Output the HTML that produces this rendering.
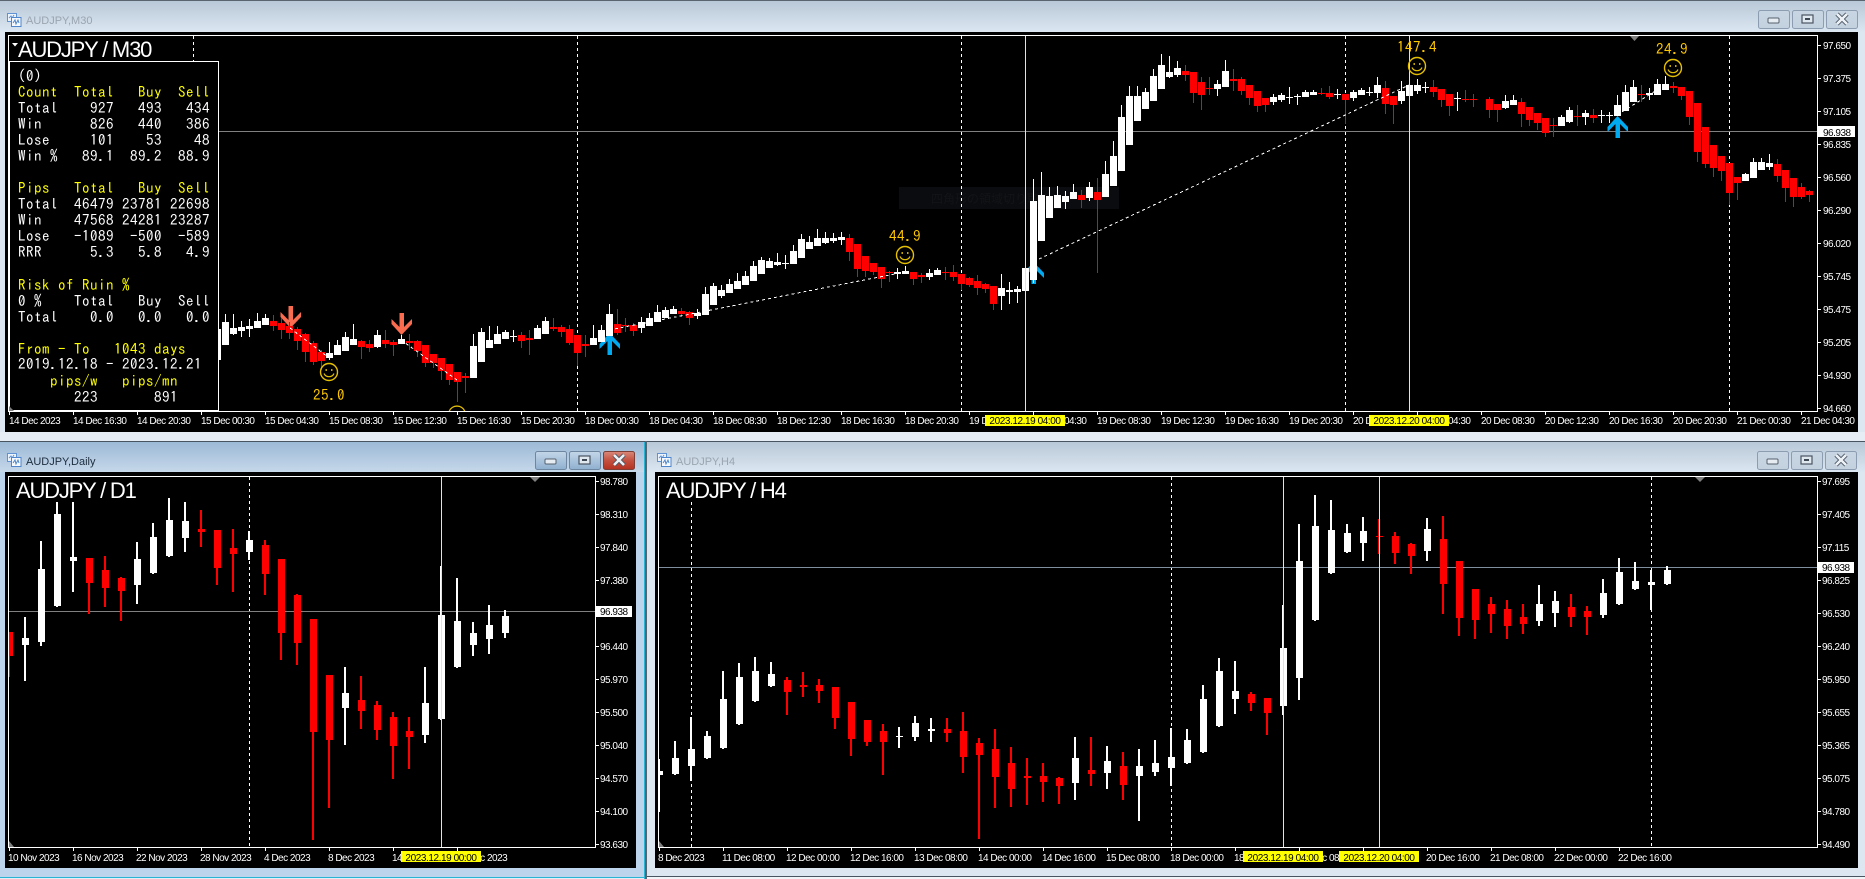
<!DOCTYPE html>
<html lang="en">
<head>
<meta charset="utf-8">
<title>AUDJPY charts</title>
<style>
html,body{margin:0;padding:0;background:#dce7f2;width:1865px;height:879px;overflow:hidden}
svg{display:block;position:absolute;left:0;top:0}
text{font-family:"Liberation Sans",sans-serif}
.a{font-size:10px;letter-spacing:-.5px;fill:#fff}
.h{font-size:10px;letter-spacing:-.42px;fill:#000;text-anchor:middle}
.b{font-size:10px;letter-spacing:-.5px;fill:#000}
.s{font-size:22px;letter-spacing:-1.2px;fill:#fff}
.ti{font-size:11px;fill:#9aa5b0}
.ta{font-size:11px;fill:#1c2c3c}
.p{font-family:"IPAGothic","Liberation Mono",monospace;font-size:15px;letter-spacing:.5px;white-space:pre;fill:#fff}
.y{fill:#ff0}
.g{font-family:"IPAGothic","Liberation Mono",monospace;font-size:15px;letter-spacing:.5px;fill:#ffc800}
.c{shape-rendering:crispEdges;fill:none}
.j{font-family:"Liberation Sans","Noto Sans CJK JP",sans-serif;font-size:12px;fill:#121417}
</style>
</head>
<body>
<svg width="1865" height="879" viewBox="0 0 1865 879" xmlns="http://www.w3.org/2000/svg">
<defs>
<linearGradient id="ti" x1="0" y1="0" x2="0" y2="1"><stop offset="0" stop-color="#b9c8d7"/><stop offset="1" stop-color="#dbe6f1"/></linearGradient>
<linearGradient id="ta" x1="0" y1="0" x2="0" y2="1"><stop offset="0" stop-color="#9cb9d6"/><stop offset="1" stop-color="#c6d8ea"/></linearGradient>
<linearGradient id="bi" x1="0" y1="0" x2="0" y2="1"><stop offset="0" stop-color="#c8d5e2"/><stop offset="1" stop-color="#c4d2e0"/></linearGradient>
<linearGradient id="ba" x1="0" y1="0" x2="0" y2="1"><stop offset="0" stop-color="#c4d6e8"/><stop offset=".5" stop-color="#a9c3dc"/><stop offset="1" stop-color="#8fb0d0"/></linearGradient>
<linearGradient id="br" x1="0" y1="0" x2="0" y2="1"><stop offset="0" stop-color="#d98a7c"/><stop offset=".5" stop-color="#c4503f"/><stop offset="1" stop-color="#b5301f"/></linearGradient>
<polygon id="au" points="0,0 10.5,11 10.5,16 2.5,8 2.5,22 -2,22 -2,8 -10,16 -10,11"/>
<g id="sm" fill="none" stroke="#e6c000"><circle r="8.5" stroke-width="1.4"/><path d="M-5 1.5A5.5 5.5 0 0 0 5 1.5" stroke-width="1.2"/><path d="M-2.8-3V-1M2.8-3V-1" stroke-width="1.3"/></g>
<g id="ic"><rect x=".5" y=".5" width="9" height="8" fill="#eef4fb" stroke="#5f93d4"/><path d="M2 5l2-2 1 2 2-3" fill="none" stroke="#5f93d4"/><rect x="4.5" y="4.5" width="9.5" height="9" fill="#f7fafd" stroke="#4f86cc"/><path d="M6 10l2-3 1 4 2-4 1 3" fill="none" stroke="#4f86cc"/></g>
<g id="gm"><rect x="10" y="8" width="11" height="5" rx="1" fill="#e6ecf2" stroke="#55606c"/></g>
<g id="gx"><rect x="10" y="5" width="11" height="8" fill="#dfe7ef" stroke="#4a5562" stroke-width="1.2"/><rect x="13" y="8" width="5" height="2" fill="#3d4854"/></g>
<g id="gc"><path d="M11 4L21 14M21 4L11 14" stroke="#4a5562" stroke-width="4.4"/><path d="M11 4L21 14M21 4L11 14" stroke="#eef2f6" stroke-width="2.6"/></g>
</defs>

<!-- window backgrounds -->
<rect width="1865" height="879" fill="#dce7f2"/>
<rect x="0" y="1" width="1865" height="31" fill="url(#ti)"/>
<rect width="1865" height="1" fill="#5a6470"/>
<rect x="0" y="432" width="1865" height="9" fill="#e6edf5"/>
<rect x="0" y="441" width="645" height="1" fill="#4a5562"/>
<rect x="646" y="441" width="1219" height="1" fill="#4a5562"/>

<rect x="0" y="442" width="645" height="437" fill="#bcd5ec"/>
<rect x="0" y="442" width="645" height="30" fill="url(#ta)"/>
<rect x="0" y="877" width="645" height="1" fill="#2ab4d4"/>
<rect x="0" y="878" width="645" height="1" fill="#e6edf5"/>
<rect x="644" y="442" width="1" height="437" fill="#2ab4d4"/>
<rect x="645" y="441" width="2" height="438" fill="#5a6470"/>
<rect x="647" y="442" width="1218" height="437" fill="#dce7f2"/>
<rect x="647" y="442" width="1218" height="30" fill="url(#ti)"/>
<rect x="647" y="876" width="1218" height="1" fill="#4a5562"/>
<rect x="647" y="877" width="1218" height="2" fill="#f2f5f8"/>

<!-- title icons & text -->
<use href="#ic" x="7" y="13"/><text class="ti" x="26" y="24">AUDJPY,M30</text>
<use href="#ic" x="7" y="453"/><text class="ta" x="26" y="465">AUDJPY,Daily</text>
<use href="#ic" x="657" y="453"/><text class="ti" x="676" y="465">AUDJPY,H4</text>

<!-- window buttons -->
<g fill="url(#bi)" stroke="#8c9db1"><rect x="1758.5" y="10.5" width="31" height="18" rx="2"/><rect x="1792.5" y="10.5" width="31" height="18" rx="2"/><rect x="1826.5" y="10.5" width="31" height="18" rx="2"/></g>
<use href="#gm" x="1758" y="10"/><use href="#gx" x="1792" y="10"/><use href="#gc" x="1826" y="10"/>
<g fill="url(#bi)" stroke="#8c9db1"><rect x="1757.5" y="451.5" width="31" height="18" rx="2"/><rect x="1791.5" y="451.5" width="31" height="18" rx="2"/><rect x="1825.5" y="451.5" width="31" height="18" rx="2"/></g>
<use href="#gm" x="1757" y="451"/><use href="#gx" x="1791" y="451"/><use href="#gc" x="1825" y="451"/>
<g fill="url(#ba)" stroke="#6f86a0"><rect x="535.5" y="451.5" width="31" height="18" rx="2"/><rect x="569.5" y="451.5" width="31" height="18" rx="2"/></g>
<rect x="603.5" y="451.5" width="31" height="18" rx="2" fill="url(#br)" stroke="#7c4038"/>
<use href="#gm" x="535" y="451"/><use href="#gx" x="569" y="451"/><use href="#gc" x="603" y="451"/>

<!-- ============ M30 ============ -->
<rect x="5" y="32" width="1853" height="400" fill="#000"/>
<rect x="899" y="187" width="220" height="22" fill="#0a0c0f"/>
<text class="j" x="931" y="203">四角形の領域切り取り</text>
<g class="c" stroke="#fff" stroke-dasharray="3 3"><path d="M193.5 36V411M577.5 36V411M961.5 36V411M1345.5 36V411M1729.5 36V411"/></g>
<path class="c" d="M218 131.5H1817" stroke="#808080"/>
<g fill="#00aaf0"><use href="#au" x="609.5" y="333"/><use href="#au" x="1033.5" y="262"/><use href="#au" x="1617.5" y="116"/></g>
<g fill="#fa6c50"><g transform="translate(290.5,328) scale(1,-1)"><use href="#au"/></g><g transform="translate(401.5,335) scale(1,-1)"><use href="#au"/></g></g>

<g transform="translate(.5,0)">
<path class="c" stroke="#fff" d="M225 314V345M233 314V335M241 321V337M249 319V337M257 313V328M265 314V325M329 342V360M337 340V355M345 332V351M353 324V345M377 330V348M401 335V344M473 334V378M481 328V362M489 326V348M497 326V344M505 330V339M513 330V342M537 325V339M545 317V334M593 325V345M601 325V342M609 304V336M641 317V333M649 313V326M657 305V322M665 307V318M673 306V314M697 309V319M705 287V315M713 283V305M721 285V298M729 279V293M737 273V289M745 271V285M753 261V281M761 257V274M769 258V268M777 253V266M785 255V269M793 245V264M801 234V258M809 236V249M817 229V246M825 232V244M833 233V243M841 232V245M897 268V279M905 266V274M929 269V280M937 268V275M1001 274V310M1009 282V304M1017 286V303M1025 268V291M1033 179V283M1041 172V241M1049 187V218M1057 186V208M1065 191V209M1073 184V199M1089 182V201M1105 161V197M1113 141V186M1121 105V171M1129 86V145M1137 86V121M1145 88V109M1153 69V101M1161 54V89M1169 56V78M1177 61V77M1217 80V96M1225 60V87M1273 94V105M1281 93V102M1289 87V104M1297 94V105M1305 90V97M1313 90V95M1337 89V99M1353 90V101M1361 88V95M1369 87V96M1377 77V98M1401 81V104M1409 78V96M1417 79V94M1425 82V93M1457 92V111M1505 95V109M1513 95V105M1561 115V126M1569 107V123M1585 110V125M1601 110V123M1609 112V123M1617 95V116M1625 85V111M1633 80V102M1649 88V100M1657 79V95M1665 76V90M1745 173V181M1753 158V178M1761 158V170M1769 154V170"/>
<path class="c" stroke="#fff" stroke-width="7" d="M217 329V360M225 322V345M233 328V334M241 327V331M249 326V329M257 321V328M265 318V325M329 353V358M337 345V355M345 337V351M353 339V345M377 335V347M401 339V344M473 346V378M481 332V362M489 340V348M497 334V344M505 332V339M513 336V337M537 328V339M545 321V334M593 338V345M601 330V342M609 314V336M641 322V328M649 318V326M657 312V322M665 310V318M673 309V314M697 313V316M705 294V315M713 286V305M721 290V296M729 284V293M737 281V289M745 276V285M753 266V281M761 260V274M769 261V268M777 262V265M785 263V264M793 251V264M801 239V258M809 242V249M817 238V246M825 238V243M833 238V241M841 237V240M897 272V274M905 271V274M929 273V277M937 270V275M1001 288V296M1009 290V292M1017 289V292M1025 268V291M1033 201V280M1041 195V241M1049 196V218M1057 195V208M1065 196V202M1073 192V199M1089 187V198M1105 174V197M1113 156V186M1121 117V171M1129 96V145M1137 96V121M1145 92V109M1153 76V101M1161 65V89M1169 72V77M1177 68V75M1217 84V89M1225 71V87M1273 97V102M1281 95V100M1289 97V98M1297 96V97M1305 92V97M1313 92V95M1337 94V95M1353 92V98M1361 90V95M1369 92V93M1377 85V93M1401 91V101M1409 85V96M1417 85V91M1425 87V88M1457 98V99M1505 101V108M1513 100V105M1561 117V126M1569 110V122M1585 113V117M1601 115V116M1609 115V116M1617 105V116M1625 92V111M1633 87V102M1649 93V95M1657 84V95M1665 84V90M1745 174V181M1753 162V178M1761 162V170M1769 163V167"/>
<path class="c" stroke="#f00" d="M273 315V331M281 318V339M289 322V339M297 327V350M305 333V362M313 341V365M321 350V370M361 340V359M369 340V352M385 330V348M393 340V356M409 334V350M417 340V357M425 345V367M433 354V368M441 358V380M449 364V385M457 372V402M465 373V393M521 332V348M529 330V355M553 318V331M561 325V337M569 325V345M577 335V366M585 335V357M617 309V335M625 318V332M633 323V336M681 308V317M689 311V325M849 234V261M857 244V277M865 256V277M873 263V275M881 267V288M889 271V282M913 272V285M921 273V283M945 267V280M953 265V281M961 274V290M969 277V287M977 275V295M985 283V293M993 286V310M1081 190V208M1097 178V273M1185 65V81M1193 72V103M1201 77V110M1209 77V95M1233 69V91M1241 77V95M1249 85V105M1257 91V112M1265 98V112M1321 88V95M1329 86V99M1345 94V124M1385 81V114M1393 96V124M1433 80V97M1441 89V107M1449 94V116M1465 90V102M1473 94V107M1489 97V118M1497 104V122M1521 98V127M1529 107V126M1537 113V130M1545 118V137M1553 118V137M1577 105V126M1593 109V123M1641 85V102M1673 82V93M1681 87V100M1689 91V125M1697 103V162M1705 127V168M1713 145V177M1721 156V181M1729 163V205M1737 177V200M1777 159V182M1785 170V202M1793 178V207M1801 183V199M1809 190V202"/>
<path class="c" stroke="#f00" stroke-width="7" d="M273 321V326M281 323V330M289 326V333M297 329V341M305 334V352M313 343V362M321 352V361M361 341V347M369 344V348M385 340V344M393 342V345M409 341V343M417 341V351M425 345V363M433 354V363M441 358V371M449 364V380M457 372V382M465 376V378M521 335V341M529 338V340M553 327V329M561 327V332M569 329V343M577 335V353M585 344V346M617 324V333M625 325V326M633 325V331M681 311V314M689 312V318M849 238V252M857 244V269M865 256V271M873 263V272M881 267V279M889 272V273M913 272V279M921 275V277M945 272V273M953 272V277M961 274V284M969 278V285M977 281V288M985 284V289M993 286V304M1081 195V200M1097 192V200M1185 71V75M1193 72V93M1201 82V95M1209 88V89M1233 79V81M1241 79V91M1249 85V98M1257 91V106M1265 98V105M1321 93V94M1329 93V97M1345 94V100M1385 88V104M1393 96V105M1433 87V92M1441 89V100M1449 94V106M1465 99V100M1473 99V100M1489 99V110M1497 104V110M1521 102V114M1529 107V120M1537 113V123M1545 118V133M1553 125V126M1577 116V117M1593 115V118M1641 94V95M1673 86V88M1681 87V96M1689 91V117M1697 103V152M1705 127V164M1713 145V168M1721 156V171M1729 163V193M1737 177V183M1777 164V176M1785 170V188M1793 178V197M1801 187V197M1809 191V195"/>
</g>
<path class="c" d="M1025.5 36V411" stroke="#ff0"/><path class="c" d="M1409.5 36V411" stroke="#ff0"/>
<g fill="none" stroke="#fff" stroke-dasharray="3 3" shape-rendering="crispEdges"><path d="M290 328L328 357M401 340L457 380M609 330L905 272M1039 259L1409 85M1617 115L1665 85"/></g>
<use href="#sm" x="329" y="372"/><use href="#sm" x="905" y="255"/><use href="#sm" x="1417" y="66"/><use href="#sm" x="1673" y="68"/>
<path d="M449.3 411A8.5 8.5 0 0 1 464.7 411" fill="none" stroke="#e6c000" stroke-width="1.4"/>
<text class="g" x="313" y="400">25.0</text><text class="g" x="889" y="241">44.9</text><text class="g" x="1397" y="52">147.4</text><text class="g" x="1656" y="54">24.9</text>

<rect x="9.5" y="61.5" width="209" height="349" fill="#000" stroke="#fff"/>
<path d="M9 411V406L14 411Z" fill="#808080"/>
<text class="p" x="18" y="81">(0)</text>
<text class="p y" x="18" y="97">Count  Total   Buy  Sell</text>
<text class="p" x="18" y="113">Total    927   493   434</text>
<text class="p" x="18" y="129">Win      826   440   386</text>
<text class="p" x="18" y="145">Lose     101    53    48</text>
<text class="p" x="18" y="161">Win %   89.1  89.2  88.9</text>
<text class="p y" x="18" y="193">Pips   Total   Buy  Sell</text>
<text class="p" x="18" y="209">Total  46479 23781 22698</text>
<text class="p" x="18" y="225">Win    47568 24281 23287</text>
<text class="p" x="18" y="241">Lose   -1089  -500  -589</text>
<text class="p" x="18" y="257">RRR      5.3   5.8   4.9</text>
<text class="p y" x="18" y="290">Risk of Ruin %</text>
<text class="p" x="18" y="306">0 %    Total   Buy  Sell</text>
<text class="p" x="18" y="322">Total    0.0   0.0   0.0</text>
<text class="p y" x="18" y="354">From - To   1043 days</text>
<text class="p" x="18" y="369">2019.12.18 - 2023.12.21</text>
<text class="p y" x="18" y="386">    pips/w   pips/mn</text>
<text class="p" x="18" y="402">       223       891</text>

<rect class="c" x="8.5" y="35.5" width="1809" height="376" stroke="#fff"/>
<path d="M12 43H18L15 46.5Z" fill="#fff"/>
<path d="M1630 36H1639L1634.5 41Z" fill="#808080"/>
<text class="s" x="18" y="57">AUDJPY / M30</text>
<path class="c" stroke="#fff" d="M1818 45.5H1821M1818 78.5H1821M1818 111.5H1821M1818 144.5H1821M1818 177.5H1821M1818 210.5H1821M1818 243.5H1821M1818 276.5H1821M1818 309.5H1821M1818 342.5H1821M1818 375.5H1821M1818 408.5H1821M9.5 412V415M73.5 412V415M137.5 412V415M201.5 412V415M265.5 412V415M329.5 412V415M393.5 412V415M457.5 412V415M521.5 412V415M585.5 412V415M649.5 412V415M713.5 412V415M777.5 412V415M841.5 412V415M905.5 412V415M969.5 412V415M1033.5 412V415M1097.5 412V415M1161.5 412V415M1225.5 412V415M1289.5 412V415M1353.5 412V415M1417.5 412V415M1481.5 412V415M1545.5 412V415M1609.5 412V415M1673.5 412V415M1737.5 412V415M1801.5 412V415"/>
<g class="a">
<text x="1823" y="49">97.650</text><text x="1823" y="82">97.375</text><text x="1823" y="115">97.105</text><text x="1823" y="148">96.835</text><text x="1823" y="181">96.560</text><text x="1823" y="214">96.290</text><text x="1823" y="247">96.020</text><text x="1823" y="280">95.745</text><text x="1823" y="313">95.475</text><text x="1823" y="346">95.205</text><text x="1823" y="379">94.930</text><text x="1823" y="412">94.660</text>
<text x="9" y="424">14 Dec 2023</text><text x="73" y="424">14 Dec 16:30</text><text x="137" y="424">14 Dec 20:30</text><text x="201" y="424">15 Dec 00:30</text><text x="265" y="424">15 Dec 04:30</text><text x="329" y="424">15 Dec 08:30</text><text x="393" y="424">15 Dec 12:30</text><text x="457" y="424">15 Dec 16:30</text><text x="521" y="424">15 Dec 20:30</text><text x="585" y="424">18 Dec 00:30</text><text x="649" y="424">18 Dec 04:30</text><text x="713" y="424">18 Dec 08:30</text><text x="777" y="424">18 Dec 12:30</text><text x="841" y="424">18 Dec 16:30</text><text x="905" y="424">18 Dec 20:30</text><text x="969" y="424">19 Dec 00:30</text><text x="1033" y="424">19 Dec 04:30</text><text x="1097" y="424">19 Dec 08:30</text><text x="1161" y="424">19 Dec 12:30</text><text x="1225" y="424">19 Dec 16:30</text><text x="1289" y="424">19 Dec 20:30</text><text x="1353" y="424">20 Dec 00:30</text><text x="1417" y="424">20 Dec 04:30</text><text x="1481" y="424">20 Dec 08:30</text><text x="1545" y="424">20 Dec 12:30</text><text x="1609" y="424">20 Dec 16:30</text><text x="1673" y="424">20 Dec 20:30</text><text x="1737" y="424">21 Dec 00:30</text><text x="1801" y="424">21 Dec 04:30</text>
</g>
<rect x="985" y="415" width="80" height="11" fill="#ff0"/><text class="h" x="1025" y="424">2023.12.19 04:00</text>
<rect x="1369" y="415" width="80" height="11" fill="#ff0"/><text class="h" x="1409" y="424">2023.12.20 04:00</text>
<rect x="1818" y="126" width="37" height="11" fill="#fff"/><text class="b" x="1823" y="136">96.938</text>

<!-- ============ D1 ============ -->
<rect x="5" y="472" width="631" height="396" fill="#000"/>
<path class="c" stroke="#fff" stroke-dasharray="3 3" d="M249.5 477V847"/>
<path class="c" d="M9 611.5H595" stroke="#808080"/>
<g transform="translate(0,0)">
<path class="c" stroke="#fff" stroke-width="2" d="M25 617V681M41 541V646M57 502V607M73 502V592M137 542V604M153 523V574M169 498V557M185 502V552M249 531V560M345 667V745M425 667V743M441 566V720M457 578V668M473 622V656M489 605V654M505 610V638"/>
<path class="c" stroke="#fff" stroke-width="7" d="M25.5 638V645M41.5 569V642M57.5 514V606M73.5 557V561M137.5 559V585M153.5 537V573M169.5 520V556M185.5 521V538M249.5 540V552M345.5 693V708M425.5 703V735M441.5 615V719M457.5 621V667M473.5 633V645M489.5 625V639M505.5 616V633"/>
<path class="c" stroke="#f00" stroke-width="2" d="M9 632V677M89 558V614M105 556V607M121 577V621M201 510V547M217 530V585M233 529V592M265 540V595M281 559V660M297 594V665M313 619V840M329 675V808M361 676V729M377 701V740M393 712V779M409 717V769"/>
<rect x="9" y="632" width="4" height="24" fill="#f00"/>
<path class="c" stroke="#f00" stroke-width="7" d="M89.5 558V583M105.5 570V588M121.5 578V591M201.5 529V532M217.5 530V568M233.5 548V554M265.5 545V574M281.5 559V633M297.5 595V643M313.5 619V732M329.5 675V740M361.5 700V711M377.5 705V730M393.5 717V746M409.5 731V737"/>
</g>
<path class="c" d="M441.5 477V847" stroke="#ff0"/>
<rect class="c" x="8.5" y="476.5" width="587" height="371" stroke="#fff"/>
<path d="M530 477H540L535 482Z" fill="#808080"/>
<path d="M9 847V841L14 847Z" fill="#808080"/>
<text class="s" x="16" y="498">AUDJPY / D1</text>
<path class="c" stroke="#fff" d="M596 481.5H599M596 514.5H599M596 547.5H599M596 580.5H599M596 646.5H599M596 679.5H599M596 712.5H599M596 745.5H599M596 778.5H599M596 811.5H599M596 844.5H599M9.5 848V851M73.5 848V851M137.5 848V851M201.5 848V851M265.5 848V851M329.5 848V851M393.5 848V851M457.5 848V851"/>
<g class="a">
<text x="600" y="485">98.780</text><text x="600" y="518">98.310</text><text x="600" y="551">97.840</text><text x="600" y="584">97.380</text><text x="600" y="650">96.440</text><text x="600" y="683">95.970</text><text x="600" y="716">95.500</text><text x="600" y="749">95.040</text><text x="600" y="782">94.570</text><text x="600" y="815">94.100</text><text x="600" y="848">93.630</text>
<text x="8" y="861">10 Nov 2023</text><text x="72" y="861">16 Nov 2023</text><text x="136" y="861">22 Nov 2023</text><text x="200" y="861">28 Nov 2023</text><text x="264" y="861">4 Dec 2023</text><text x="328" y="861">8 Dec 2023</text><text x="392" y="861">14 Dec 2023</text><text x="456" y="861">18 Dec 2023</text>
</g>
<rect x="401" y="851" width="80" height="11" fill="#ff0"/><text class="h" x="441" y="861">2023.12.19 00:00</text>
<rect x="596" y="606" width="36" height="11" fill="#fff"/><text class="b" x="600" y="615">96.938</text>

<!-- ============ H4 ============ -->
<rect x="655" y="472" width="1203" height="396" fill="#000"/>
<path class="c" stroke="#fff" stroke-dasharray="3 3" d="M691.5 502V847M1171.5 477V847M1651.5 477V847"/>
<path class="c" d="M659 567.5H1817" stroke="#7f8fa0"/>
<path class="c" stroke="#fff" stroke-width="2" d="M659 759V812M675 741V775M691 717V781M707 731V759M723 671V749M739 663V725M755 657V702M771 662V687M899 727V748M915 716V741M931 718V742M1075 737V800M1107 746V789M1139 749V821M1155 740V776M1171 728V786M1187 729V764M1203 685V753M1219 658V727M1235 661V714M1283 605V715M1299 524V700M1315 495V621M1331 500V574M1347 524V553M1363 517V561M1427 518V561M1539 585V626M1555 591V627M1603 579V618M1619 558V605M1635 562V590M1651 570V610M1667 566V585"/>
<rect x="659" y="771" width="4" height="4" fill="#fff"/>
<path class="c" stroke="#fff" stroke-width="7" d="M675.5 758V774M691.5 749V766M707.5 736V758M723.5 699V748M739.5 677V724M755.5 671V701M771.5 674V686M899.5 736V737M915.5 723V737M931.5 729V731M1075.5 758V783M1107.5 761V773M1139.5 766V776M1155.5 763V772M1171.5 757V768M1187.5 740V763M1203.5 699V752M1219.5 671V726M1235.5 691V699M1283.5 648V706M1299.5 561V678M1315.5 526V620M1331.5 530V573M1347.5 533V552M1363.5 531V543M1427.5 529V551M1539.5 604V621M1555.5 601V613M1603.5 593V615M1619.5 572V604M1635.5 581V589M1651.5 582V585M1667.5 570V584"/>
<path class="c" stroke="#f00" stroke-width="2" d="M787 677V715M803 672V697M819 679V703M835 687V729M851 702V756M867 720V746M883 724V775M947 718V742M963 712V773M979 738V839M995 729V808M1011 747V807M1027 758V805M1043 763V802M1059 777V804M1091 737V786M1123 752V800M1251 692V711M1267 698V735M1379 519V554M1395 532V564M1411 543V574M1443 516V614M1459 561V636M1475 589V639M1491 597V633M1507 600V639M1523 604V634M1571 594V627M1587 606V635"/>
<path class="c" stroke="#f00" stroke-width="7" d="M787.5 680V692M803.5 685V687M819.5 685V691M835.5 687V718M851.5 702V739M867.5 720V742M883.5 731V742M947.5 729V733M963.5 731V757M979.5 743V755M995.5 749V777M1011.5 763V789M1027.5 776V778M1043.5 776V782M1059.5 778V786M1091.5 770V774M1123.5 766V785M1251.5 694V703M1267.5 698V713M1379.5 536V537M1395.5 536V553M1411.5 544V556M1443.5 539V584M1459.5 561V618M1475.5 589V620M1491.5 604V614M1507.5 609V626M1523.5 617V624M1571.5 607V617M1587.5 611V617"/>
<path class="c" d="M1283.5 477V847" stroke="#ff0"/><path class="c" d="M1379.5 477V847" stroke="#ff0"/>
<rect class="c" x="658.5" y="476.5" width="1159" height="371" stroke="#fff"/>
<path d="M1695 477H1705L1700 482Z" fill="#808080"/>
<path d="M659 847V841L664 847Z" fill="#808080"/>
<text class="s" x="666" y="498">AUDJPY / H4</text>
<path class="c" stroke="#fff" d="M1818 481.5H1821M1818 514.5H1821M1818 547.5H1821M1818 580.5H1821M1818 613.5H1821M1818 646.5H1821M1818 679.5H1821M1818 712.5H1821M1818 745.5H1821M1818 778.5H1821M1818 811.5H1821M1818 844.5H1821M659.5 848V851M723.5 848V851M787.5 848V851M851.5 848V851M915.5 848V851M979.5 848V851M1043.5 848V851M1107.5 848V851M1171.5 848V851M1235.5 848V851M1299.5 848V851M1363.5 848V851M1427.5 848V851M1491.5 848V851M1555.5 848V851M1619.5 848V851"/>
<g class="a">
<text x="1822" y="485">97.695</text><text x="1822" y="518">97.405</text><text x="1822" y="551">97.115</text><text x="1822" y="584">96.825</text><text x="1822" y="617">96.530</text><text x="1822" y="650">96.240</text><text x="1822" y="683">95.950</text><text x="1822" y="716">95.655</text><text x="1822" y="749">95.365</text><text x="1822" y="782">95.075</text><text x="1822" y="815">94.780</text><text x="1822" y="848">94.490</text>
<text x="658" y="861">8 Dec 2023</text><text x="722" y="861">11 Dec 08:00</text><text x="786" y="861">12 Dec 00:00</text><text x="850" y="861">12 Dec 16:00</text><text x="914" y="861">13 Dec 08:00</text><text x="978" y="861">14 Dec 00:00</text><text x="1042" y="861">14 Dec 16:00</text><text x="1106" y="861">15 Dec 08:00</text><text x="1170" y="861">18 Dec 00:00</text><text x="1234" y="861">18 Dec 16:00</text><text x="1298" y="861">19 Dec 08:00</text><text x="1426" y="861">20 Dec 16:00</text><text x="1490" y="861">21 Dec 08:00</text><text x="1554" y="861">22 Dec 00:00</text><text x="1618" y="861">22 Dec 16:00</text>
</g>
<rect x="1243" y="851" width="80" height="11" fill="#ff0"/><text class="h" x="1283" y="861">2023.12.19 04:00</text>
<rect x="1339" y="851" width="80" height="11" fill="#ff0"/><text class="h" x="1379" y="861">2023.12.20 04:00</text>
<rect x="1818" y="562" width="36" height="11" fill="#fff"/><text class="b" x="1822" y="571">96.938</text>
</svg>
</body>
</html>
